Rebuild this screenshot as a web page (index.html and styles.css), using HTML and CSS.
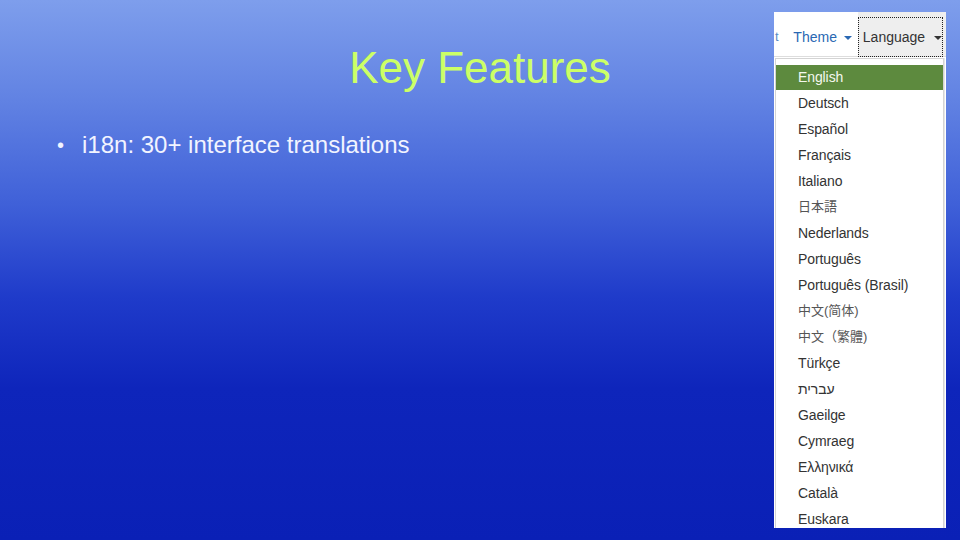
FILE: index.html
```html
<!DOCTYPE html>
<html lang="en">
<head>
<meta charset="utf-8">
<title>Key Features</title>
<link rel="stylesheet" href="styles.css">
</head>
<body>
<div class="slide">
  <h1 class="title">Key Features</h1>
  <ul class="bullets">
    <li>i18n: 30+ interface translations</li>
  </ul>

  <div class="shot">
    <div class="navbar">
      <span class="nav-cut">t</span>
      <span class="nav-theme">Theme <span class="caret"></span></span>
      <span class="nav-lang"><span class="lang-inner">Language <span class="caret dark"></span></span></span>
    </div>
    <ul class="menu">
      <li class="active">English</li>
      <li>Deutsch</li>
      <li>Español</li>
      <li>Français</li>
      <li>Italiano</li>
      <li class="cjk jp">日本語</li>
      <li>Nederlands</li>
      <li>Português</li>
      <li>Português (Brasil)</li>
      <li class="cjk sc">中文(简体)</li>
      <li class="cjk tc">中文（繁體)</li>
      <li>Türkçe</li>
      <li>עברית</li>
      <li>Gaeilge</li>
      <li>Cymraeg</li>
      <li>Ελληνικά</li>
      <li>Català</li>
      <li>Euskara</li>
    </ul>
  </div>
</div>
</body>
</html>
```

FILE: styles.css
```css
html, body {
  margin: 0;
  padding: 0;
}

body {
  width: 960px;
  height: 540px;
  overflow: hidden;
  font-family: "Liberation Sans", Arial, sans-serif;
}

.slide {
  position: relative;
  width: 960px;
  height: 540px;
  box-sizing: border-box;
  padding-top: 42px;
  background: linear-gradient(to bottom,
    #7e9eec 0%,
    #6283e3 18%,
    #3f60d8 38%,
    #1f3bca 55%,
    #0e25bb 72%,
    #0a20b6 100%);
}

.title {
  margin: 0;
  text-align: center;
  font-weight: normal;
  font-size: 44px;
  line-height: 52px;
  color: #ccff66;
}

.bullets {
  margin: 36px 0 0 0;
  padding: 0 0 0 82px;
  list-style: none;
}

.bullets li {
  position: relative;
  font-size: 24px;
  line-height: 30px;
  color: #f2f4ff;
}

.bullets li::before {
  content: "\2022";
  position: absolute;
  left: -25px;
  top: 0;
  font-size: 20px;
}

/* the embedded screenshot, placed on the slide canvas */
.shot {
  position: absolute;
  left: 774px;
  top: 12px;
  width: 172px;
  height: 516px;
  background: #ffffff;
  overflow: hidden;
}

.navbar {
  display: flex;
  align-items: stretch;
  height: 45px;
  border-bottom: 1px solid #dddddd;
  box-sizing: border-box;
  font-size: 14px;
  line-height: 50px;
}

.nav-cut {
  width: 7px;
  padding-left: 1px;
  color: #5b8cc6;
  font-size: 13px;
}

.nav-theme {
  margin-left: 14px;
  color: #2a68b3;
  white-space: nowrap;
}

.nav-lang {
  margin-left: 6px;
  flex: 1;
  background: #eeeeee;
  padding-top: 5px;
  padding-right: 3px;
  box-sizing: border-box;
}

.lang-inner {
  display: block;
  height: 40px;
  line-height: 39px;
  border: 1px dotted #222222;
  padding-left: 4px;
  color: #333333;
  white-space: nowrap;
  box-sizing: border-box;
}

.caret {
  display: inline-block;
  width: 0;
  height: 0;
  margin-left: 3px;
  vertical-align: middle;
  border-top: 4px solid #2a68b3;
  border-left: 4px solid transparent;
  border-right: 4px solid transparent;
}

.caret.dark {
  border-top-color: #333333;
  margin-left: 5px;
}

.menu {
  list-style: none;
  margin: 1px 2px 0 1px;
  padding: 6px 0 0 0;
  border: 1px solid #d4d4d4;
  border-bottom: none;
  background: #ffffff;
  box-shadow: 1px 0 0 #e6e6e6;
}

.menu li {
  height: 26px;
  line-height: 26px;
  padding-left: 22px;
  font-size: 14px;
  letter-spacing: -0.1px;
  color: #333333;
  white-space: nowrap;
}

.menu li.active {
  background: #5d8a3e;
  color: #f4f8ee;
  height: 25px;
  line-height: 25px;
  margin-bottom: 0;
}

.menu li.cjk {
  color: #555555;
  font-size: 13px;
  letter-spacing: 0;
}

.menu li.jp {
  font-family: "Liberation Sans", "Noto Sans CJK JP", sans-serif;
}

.menu li.sc {
  font-family: "Liberation Sans", "Noto Sans CJK SC", sans-serif;
}

.menu li.tc {
  font-family: "Liberation Sans", "Noto Sans CJK TC", sans-serif;
}
```
